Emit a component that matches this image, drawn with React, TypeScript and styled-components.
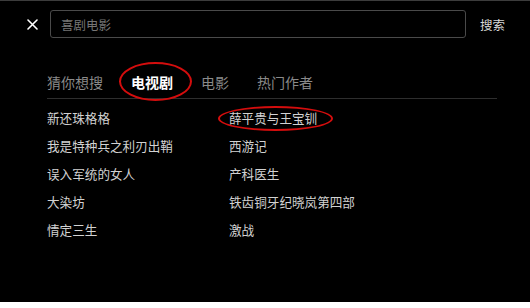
import * as React from 'react';
import styled, { createGlobalStyle } from 'styled-components';

const GlobalStyle = createGlobalStyle`
  html, body {
    margin: 0;
    padding: 0;
    background: #ffffff;
  }
  body {
    font-family: "Noto Sans CJK SC", "Noto Sans", sans-serif;
  }
`;

const Screen = styled.div`
  height: 301px;
  background: #000000;
  border-top: 1px solid #3c3c3c;
  overflow: hidden;
`;

const SearchBar = styled.div`
  display: flex;
  flex-direction: row;
  align-items: center;
  padding: 9px 0 0 27px;
`;

const CloseButton = styled.div`
  width: 11px;
  height: 11px;
  display: flex;
  align-items: center;
  justify-content: center;
  margin-right: 12px;
  cursor: pointer;
`;

const Input = styled.input`
  box-sizing: border-box;
  width: 416px;
  height: 28px;
  padding: 0 10px;
  background: #000000;
  border: 1px solid #4a4a4a;
  border-radius: 3px;
  color: #dddddd;
  font-family: inherit;
  font-size: 12.5px;
  outline: none;

  ::placeholder {
    color: #6a6a6a;
  }
`;

const SearchButton = styled.div`
  margin-left: 14px;
  font-size: 12.5px;
  color: #d8d8d8;
  cursor: pointer;
  user-select: none;
`;

const Tabs = styled.div`
  display: flex;
  flex-direction: row;
  gap: 28px;
  margin: 34px 33px 0 47px;
  padding-bottom: 6px;
  border-bottom: 1px solid #2e2e2e;
`;

const Circled = styled.span<{ $circled?: boolean }>`
  position: relative;

  ${(props) =>
    props.$circled
      ? `
    &::after {
      content: '';
      position: absolute;
      border: 2px solid #d40d0d;
      border-radius: 50%;
      pointer-events: none;
    }
  `
      : ''}
`;

const Tab = styled(Circled)<{ $active?: boolean }>`
  font-size: 14px;
  line-height: 20px;
  color: ${(props) => (props.$active ? '#ffffff' : '#8a8a8a')};
  font-weight: ${(props) => (props.$active ? 'bold' : 'normal')};
  cursor: pointer;

  &::after {
    left: -12px;
    right: -19px;
    top: -10px;
    bottom: -9px;
  }
`;

const List = styled.div`
  display: grid;
  grid-template-columns: 182px 1fr;
  margin: 5px 0 0 47px;
`;

const Item = styled(Circled)`
  font-size: 12.6px;
  line-height: 28px;
  color: #d2d2d2;
  white-space: nowrap;
  justify-self: start;
  cursor: pointer;

  &::after {
    left: -11px;
    right: -16px;
    top: 2px;
    bottom: 1px;
  }
`;

const tabs = ['猜你想搜', '电视剧', '电影', '热门作者'];

const leftColumn = ['新还珠格格', '我是特种兵之利刃出鞘', '误入军统的女人', '大染坊', '情定三生'];
const rightColumn = ['薛平贵与王宝钏', '西游记', '产科医生', '铁齿铜牙纪晓岚第四部', '激战'];

const CloseIcon = () => (
  <svg width="11" height="11" viewBox="0 0 11 11">
    <path d="M1 1 L10 10 M10 1 L1 10" stroke="#ffffff" strokeWidth="1.6" strokeLinecap="round" />
  </svg>
);

export default function App() {
  const [active, setActive] = React.useState(1);
  const [query, setQuery] = React.useState('');

  const rows: string[] = [];
  leftColumn.forEach((name, i) => {
    rows.push(name);
    rows.push(rightColumn[i]);
  });

  return (
    <>
      <GlobalStyle />
      <Screen>
        <SearchBar>
          <CloseButton>
            <CloseIcon />
          </CloseButton>
          <Input placeholder="喜剧电影" value={query} onChange={(e) => setQuery(e.target.value)} />
          <SearchButton>搜索</SearchButton>
        </SearchBar>

        <Tabs>
          {tabs.map((name, i) => (
            <Tab key={name} $active={i === active} $circled={i === 1} onClick={() => setActive(i)}>
              {name}
            </Tab>
          ))}
        </Tabs>

        <List>
          {rows.map((name) => (
            <Item key={name} $circled={name === '薛平贵与王宝钏'}>
              {name}
            </Item>
          ))}
        </List>
      </Screen>
    </>
  );
}
